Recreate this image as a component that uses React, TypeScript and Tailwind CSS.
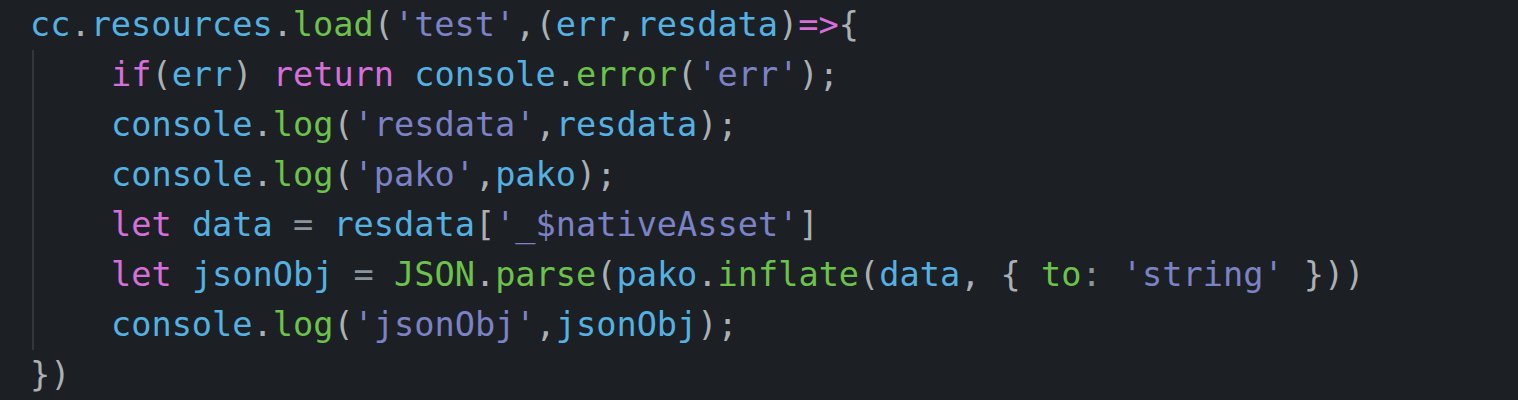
type Tok = [string, string];

const B = 'text-[#55b1e2]';
const G = 'text-[#6cc24a]';
const K = 'text-[#d66fdc]';
const S = 'text-[#7c82c6]';
const P = 'text-[#abb0b4]';
const O = 'text-[#8c949b]';

const lines: { indent: boolean; toks: Tok[] }[] = [
  {
    indent: false,
    toks: [
      ['cc', B], ['.', P], ['resources', B], ['.', P], ['load', G], ['(', P], ["'test'", S], [',', P], ['(', P],
      ['err', B], [',', P], ['resdata', B], [')', P], ['=>', K], ['{', P],
    ],
  },
  {
    indent: true,
    toks: [
      ['if', K], ['(', P], ['err', B], [')', P], [' ', P], ['return', K], [' ', P], ['console', B], ['.', P],
      ['error', G], ['(', P], ["'err'", S], [')', P], [';', P],
    ],
  },
  {
    indent: true,
    toks: [['console', B], ['.', P], ['log', G], ['(', P], ["'resdata'", S], [',', P], ['resdata', B], [')', P], [';', P]],
  },
  {
    indent: true,
    toks: [['console', B], ['.', P], ['log', G], ['(', P], ["'pako'", S], [',', P], ['pako', B], [')', P], [';', P]],
  },
  {
    indent: true,
    toks: [['let', K], [' ', P], ['data', B], [' ', P], ['=', O], [' ', P], ['resdata', B], ['[', P], ["'_$nativeAsset'", S], [']', P]],
  },
  {
    indent: true,
    toks: [
      ['let', K], [' ', P], ['jsonObj', B], [' ', P], ['=', O], [' ', P], ['JSON', G], ['.', P], ['parse', G], ['(', P],
      ['pako', B], ['.', P], ['inflate', G], ['(', P], ['data', B], [',', P], [' ', P], ['{', P], [' ', P], ['to', G],
      [':', O], [' ', P], ["'string'", S], [' ', P], ['}', P], [')', P], [')', P],
    ],
  },
  {
    indent: true,
    toks: [['console', B], ['.', P], ['log', G], ['(', P], ["'jsonObj'", S], [',', P], ['jsonObj', B], [')', P], [';', P]],
  },
  { indent: false, toks: [['})', P]] },
];

export default function App() {
  return (
    <div className="w-[1518px] h-[400px] bg-[#1c2024] overflow-hidden">
      <div className="pl-[30px] font-['DejaVu_Sans_Mono',monospace] text-[33.6px] leading-[50px] whitespace-pre">
        {lines.map((line, i) => (
          <div key={i} className="flex">
            {line.indent && (
              <span className="ml-[2px] w-[79px] shrink-0 border-l-2 border-[#31373d]">{' '}</span>
            )}
            <span>
              {line.toks.map(([t, c], j) => (
                <span key={j} className={c}>
                  {t}
                </span>
              ))}
            </span>
          </div>
        ))}
      </div>
    </div>
  );
}
